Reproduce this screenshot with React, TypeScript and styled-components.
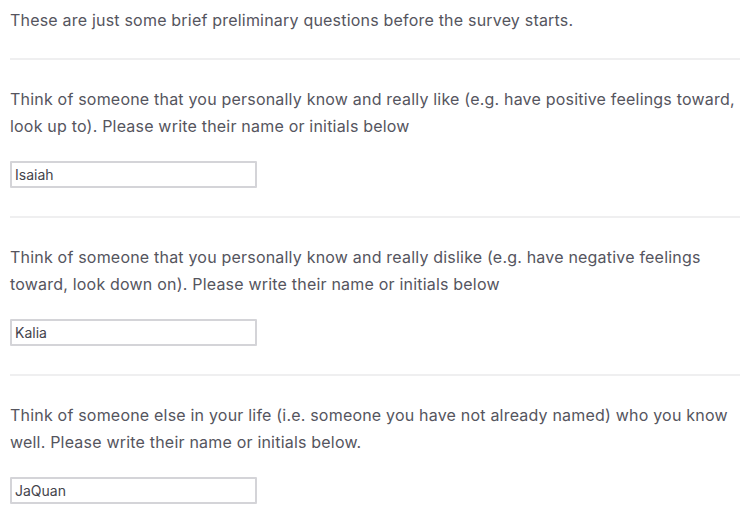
import React from 'react';
import styled, { createGlobalStyle } from 'styled-components';

const GlobalStyle = createGlobalStyle`
  body {
    margin: 0;
    background: #ffffff;
    font-family: Inter, "Liberation Sans", sans-serif;
  }
`;

const Page = styled('div')`
  width: 730px;
  padding: 7px 0 0 10px;
`;

const Intro = styled('p')`
  margin: 0 0 24px;
  font-size: 16px;
  line-height: 27px;
  letter-spacing: 0.2px;
  color: #55555e;
`;

const Divider = styled('hr')`
  margin: 0;
  border: none;
  height: 2px;
  background: #efeff0;
`;

const Question = styled('div')`
  padding: 26px 0 28px;
`;

const QuestionText = styled('p')`
  margin: 0 0 21px;
  font-size: 16px;
  line-height: 27px;
  letter-spacing: 0.2px;
  color: #55555e;
`;

const TextInput = styled('input')`
  display: block;
  box-sizing: border-box;
  width: 247px;
  height: 27px;
  margin: 0;
  padding: 0 3px;
  border: 2px solid #d4d4d8;
  border-radius: 1px;
  font-family: Inter, "Liberation Sans", sans-serif;
  font-size: 14px;
  color: #44444c;
  outline: none;
`;

interface Item {
  text: string;
  value: string;
}

const items: Item[] = [
  {
    text: 'Think of someone that you personally know and really like (e.g. have positive feelings toward, look up to). Please write their name or initials below',
    value: 'Isaiah',
  },
  {
    text: 'Think of someone that you personally know and really dislike (e.g. have negative feelings toward, look down on). Please write their name or initials below',
    value: 'Kalia',
  },
  {
    text: 'Think of someone else in your life (i.e. someone you have not already named) who you know well. Please write their name or initials below.',
    value: 'JaQuan',
  },
];

const App: React.FC = () => {
  return (
    <Page>
      <GlobalStyle />
      <Intro>These are just some brief preliminary questions before the survey starts.</Intro>
      {items.map((item) => (
        <React.Fragment key={item.value}>
          <Divider />
          <Question>
            <QuestionText>{item.text}</QuestionText>
            <TextInput defaultValue={item.value} />
          </Question>
        </React.Fragment>
      ))}
    </Page>
  );
};

export default App;
